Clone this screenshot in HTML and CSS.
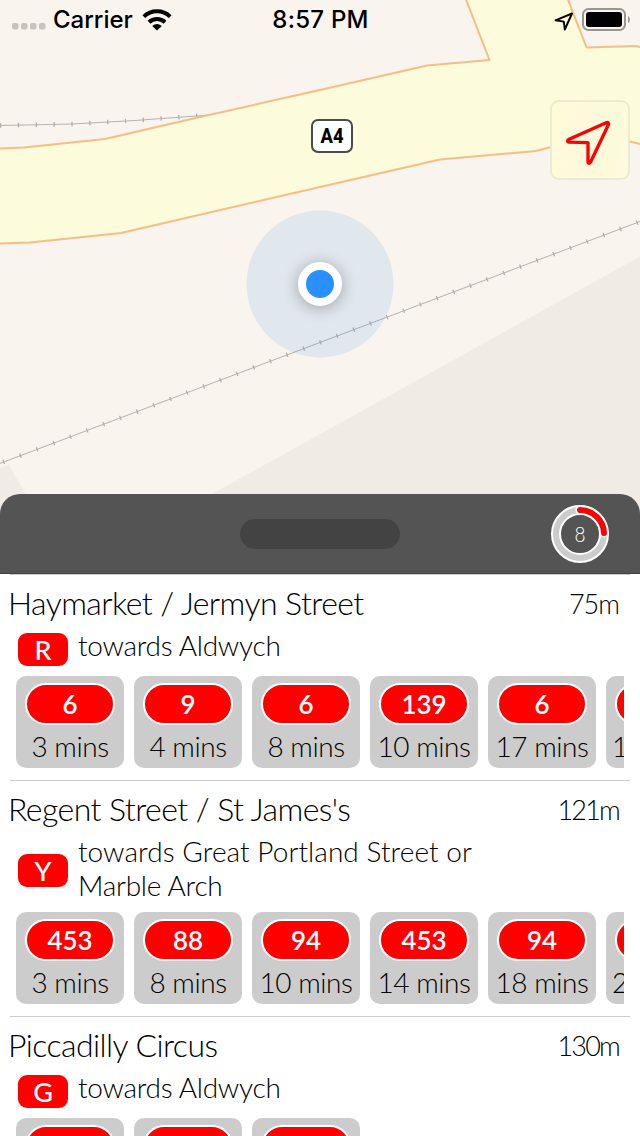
FILE: index.html
```html
<!DOCTYPE html>
<html lang="en">
<head>
<meta charset="utf-8">
<meta name="viewport" content="width=device-width">
<title>Nearby bus stops</title>
<link rel="stylesheet" href="styles.css">
</head>
<body>
<div class="app">
  <div class="map">
    <svg class="map-canvas" viewBox="0 0 640 514" width="640" height="514">
      <rect class="land" width="640" height="514"/>
      <path class="building" d="M0 468.500L8.500 464.500L37 514H0ZM176 514L640 256.500V514Z"/>
      <path class="rail" d="M0 125.500L72 124L135 120.500L216 114.500"/>
      <path class="ties ties-north" d="M0 125.500L72 124L135 120.500L200 115.500"/>
      <path class="road" d="M-3 148.500L24 147.500L105 139L200 117L320 90L427 65.500L489.500 60L465 -3H567L586.500 47.500L636 46L644 48V145L630 141.500L605 136L551 147L536 151L440 159.500L320 187L121 233L30 242.500L-3 243.500Z"/>
      <path class="rail" d="M0 463.400L640 221.500"/>
      <path class="ties ties-south" d="M3.200 462.200L640 221.500"/>
      <circle class="accuracy" cx="320" cy="284" r="73.500"/>
      <rect class="shield" x="312" y="120" width="40" height="32" rx="6"/>
      <text class="shield-label" x="332" y="143" text-anchor="middle" textLength="23" lengthAdjust="spacingAndGlyphs">A4</text>
    </svg>
    <span class="position"></span>
    <button class="locate" aria-label="Locate me">
      <svg viewBox="0 0 80 80" width="80" height="80"><path d="M56.700 22.600L18.500 39.600Q16.500 41 18.800 42.200L38 42.600V62.300Q39 64.300 40.500 62.300L58.500 24.500Q59 22 56.700 22.600Z"/></svg>
    </button>
    <div class="status">
      <div class="status-side">
        <svg width="34" height="8" viewBox="0 0 34 8" class="signal"><rect width="6.500" height="6.500" rx="2"/><rect x="9" width="6.500" height="6.500" rx="2"/><rect x="18" width="6.500" height="6.500" rx="2"/><rect x="27" width="6.500" height="6.500" rx="2"/></svg>
        <span class="carrier">Carrier</span>
        <svg class="wifi" width="30" height="22" viewBox="0 0 30 22"><path d="M1.800 7.600A19.200 19.200 0 0 1 28.200 7.600M7 13.200A11.800 11.800 0 0 1 23 13.200"/><path class="solid" d="M10.200 17Q15 12.800 19.800 17L15 21.600Z"/></svg>
      </div>
      <span class="clock">8:57 PM</span>
      <div class="status-side status-right">
        <svg width="20" height="20" viewBox="0 0 20 20" class="arrow"><path d="M18 2.500L1.500 9.300L9.800 10.600L10.800 18.500Z"/></svg>
        <svg width="48" height="24" viewBox="0 0 48 24" class="battery"><rect class="case" x="1" y="1" width="42" height="21" rx="5.500"/><rect x="4" y="4" width="36" height="15" rx="3"/><path class="nub" d="M46 8Q48 9 48 11.500Q48 14 46 15Z"/></svg>
      </div>
    </div>
  </div>
  <main class="sheet">
    <header class="grip-bar">
      <span class="grip"></span>
      <svg class="timer" width="60" height="60" viewBox="0 0 60 60"><circle class="ring-edge" cx="30" cy="30" r="24"/><circle class="ring" cx="30" cy="30" r="24"/><path class="arc-edge" d="M30 6A24 24 0 0 1 54 29"/><path class="arc" d="M30 6A24 24 0 0 1 54 29"/><text x="30" y="37.800" text-anchor="middle" textLength="11" lengthAdjust="spacingAndGlyphs">8</text></svg>
    </header>
    <section class="stop">
      <div class="stop-head"><h2>Haymarket / Jermyn Street</h2><span class="distance">75m</span></div>
      <div class="direction"><b class="letter">R</b><p>towards Aldwych</p></div>
      <div class="arrivals">
        <div class="bus"><b>6</b><span>3 mins</span></div>
        <div class="bus"><b>9</b><span>4 mins</span></div>
        <div class="bus"><b>6</b><span>8 mins</span></div>
        <div class="bus"><b>139</b><span>10 mins</span></div>
        <div class="bus"><b>6</b><span>17 mins</span></div>
        <div class="bus next"><b></b><span>1</span></div>
      </div>
    </section>
    <section class="stop">
      <div class="stop-head"><h2>Regent Street / St James's</h2><span class="distance long">121m</span></div>
      <div class="direction"><b class="letter">Y</b><p class="wide">towards Great Portland Street or<br><span class="tight">Marble Arch</span></p></div>
      <div class="arrivals">
        <div class="bus"><b>453</b><span>3 mins</span></div>
        <div class="bus"><b>88</b><span>8 mins</span></div>
        <div class="bus"><b>94</b><span>10 mins</span></div>
        <div class="bus"><b>453</b><span>14 mins</span></div>
        <div class="bus"><b>94</b><span>18 mins</span></div>
        <div class="bus next"><b></b><span>2</span></div>
      </div>
    </section>
    <section class="stop">
      <div class="stop-head"><h2>Piccadilly Circus</h2><span class="distance long">130m</span></div>
      <div class="direction"><b class="letter">G</b><p>towards Aldwych</p></div>
      <div class="arrivals">
        <div class="bus"><b></b></div>
        <div class="bus"><b></b></div>
        <div class="bus"><b></b></div>
      </div>
    </section>
  </main>
</div>
</body>
</html>
```
FILE: styles.css
```css
* { box-sizing: border-box; }
body { margin: 0; background: #fff; font-family: Lato, "Open Sans", sans-serif; font-weight: 300; color: #000; }
h2, p { margin: 0; font-weight: 300; }
.app { width: 640px; height: 1136px; overflow: hidden; }

/* Map */
.map { position: relative; height: 514px; }
.map-canvas { display: block; }
.land { fill: #f9f4ed; }
.building { fill: #f0ebe4; }
.road { fill: #fcfbdc; stroke: #f6bd84; stroke-width: 2; stroke-linejoin: round; }
.rail { fill: none; stroke: #b4b3b1; stroke-width: 1; }
.ties { fill: none; stroke: #b0afae; stroke-width: 4.500; }
.ties-north { stroke-dasharray: 1.300 16.550; }
.ties-south { stroke-dasharray: 1.300 16.516; }
.accuracy { fill: #3f93f0; fill-opacity: .13; }
.shield { fill: #fff; stroke: #4a4a4a; stroke-width: 2; }
.shield-label { font: 800 20px Roboto, sans-serif; }
.position { position: absolute; left: 298px; top: 262px; width: 44px; height: 44px; border: 8.500px solid #fff; border-radius: 50%; background: #2a8fff; box-shadow: 0 2px 16px rgba(0, 0, 0, .3); }
.locate { position: absolute; left: 550px; top: 100px; width: 80px; height: 80px; padding: 0; border: 0; border-radius: 9px; background: linear-gradient(100deg, #fefcd9, #fef8dc 45%, #fdfadb 75%, #fefae0); box-shadow: inset 0 0 0 2px #ecebd0; }
.locate svg { display: block; fill: none; stroke: #f00; stroke-width: 3.300; stroke-linejoin: round; }

/* Status bar */
.status { position: absolute; inset: 0 0 auto; height: 40px; display: grid; grid-template-columns: 1fr auto 1fr; align-items: center; padding: 0 10px 0 12px; font: 500 24px/40px Inter, sans-serif; }
.status-side { display: flex; align-items: center; }
.status-right { justify-content: flex-end; gap: 8px; }
.signal { fill: #c8c4bd; margin-top: 14px; }
.carrier { margin-left: 7px; }
.clock { letter-spacing: .25px; margin-left: -1px; }
.wifi { margin-left: 9px; fill: none; stroke: #000; stroke-width: 4; }
.wifi .solid { fill: #000; stroke: none; }
.arrow { fill: none; stroke: #000; stroke-width: 1.900; stroke-linejoin: round; margin-top: 1px; }
.battery .case { fill: none; stroke: #999590; stroke-width: 2; }
.battery .nub { fill: #999590; }

/* Sheet */
.sheet { position: relative; margin-top: -20px; }
.grip-bar { height: 80px; border-radius: 20px 20px 0 0; background: #545454; border-bottom: 1px solid #434343; display: grid; grid-template-columns: 1fr 160px 1fr; align-items: center; padding: 0 30px; }
.grip { grid-column: 2; height: 30px; border-radius: 15px; background: #434343; }
.timer { justify-self: end; }
.timer circle, .timer path { fill: none; stroke-linecap: round; }
.ring-edge { stroke: #fff; stroke-width: 10; }
.ring { stroke: #ccc; stroke-width: 6; }
.arc-edge { stroke: #fff; stroke-width: 9; }
.arc { stroke: #f00; stroke-width: 6; }
.timer text { font: 300 21.500px Lato, sans-serif; fill: #fff; }

/* Stops */
.stop { display: flow-root; }
.stop::before { content: ""; display: block; height: 1px; margin: 0 10px; background: #ccc; }
.stop-head { display: flex; justify-content: space-between; height: 55px; padding: 8px 20px 0 8px; white-space: nowrap; }
.stop-head h2 { font-size: 32px; line-height: 40px; letter-spacing: -.570px; }
.distance { font-size: 27px; line-height: 41px; letter-spacing: -1px; margin-right: 1px; }
.distance.long { letter-spacing: -1.800px; }
.direction { display: flex; align-items: center; min-height: 39px; padding-left: 18px; }
.letter { width: 50px; height: 33px; border-radius: 9px; background: #f00; color: #fff; font-size: 27px; line-height: 33px; font-weight: 500; text-align: center; }
.direction p { align-self: flex-start; margin: -2.500px 0 0 10px; padding-bottom: 3.500px; font-size: 28px; line-height: 34px; letter-spacing: -.270px; white-space: nowrap; }
.direction .wide { letter-spacing: .060px; }
.direction .tight { letter-spacing: -.250px; }
.arrivals { display: flex; gap: 10px; margin: 7px 16px 12px; overflow: hidden; }
.bus { flex: 0 0 108px; height: 92px; padding-top: 7px; border-radius: 10px; background: #ccc; display: flex; flex-direction: column; align-items: center; white-space: nowrap; }
.bus b { flex: none; width: 90px; height: 42px; border: 2px solid #fff; border-radius: 21px; background: #f00; color: #fff; font-size: 26px; font-weight: 600; line-height: 39px; text-align: center; }
.bus span { font-size: 28px; line-height: 42px; letter-spacing: -.450px; }
.bus.next span { align-self: flex-start; margin-left: 6px; }
```
